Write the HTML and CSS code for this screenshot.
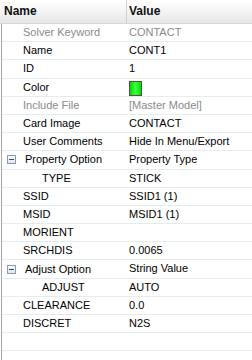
FILE: index.html
```html
<!DOCTYPE html>
<html lang="en">
<head>
    <meta charset="UTF-8">
    <title>Card Properties</title>
    <link rel="stylesheet" href="styles.css">
</head>
<body>
    <div class="grid">
        <div class="head">
            <div class="hcell">Name</div>
            <div class="hcell hval">Value</div>
        </div>
        <div class="rows">
            <div class="row dim"><span class="name">Solver Keyword</span><span class="val">CONTACT</span></div>
            <div class="row"><span class="name">Name</span><span class="val">CONT1</span></div>
            <div class="row"><span class="name">ID</span><span class="val">1</span></div>
            <div class="row"><span class="name">Color</span><span class="val"><i class="swatch"></i></span></div>
            <div class="row dim"><span class="name">Include File</span><span class="val">[Master Model]</span></div>
            <div class="row"><span class="name">Card Image</span><span class="val">CONTACT</span></div>
            <div class="row"><span class="name">User Comments</span><span class="val">Hide In Menu/Export</span></div>
            <div class="row group"><span class="name"><i class="toggle"></i>Property Option</span><span class="val">Property Type</span></div>
            <div class="row sub"><span class="name">TYPE</span><span class="val">STICK</span></div>
            <div class="row"><span class="name">SSID</span><span class="val">SSID1 (1)</span></div>
            <div class="row"><span class="name">MSID</span><span class="val">MSID1 (1)</span></div>
            <div class="row"><span class="name">MORIENT</span><span class="val"></span></div>
            <div class="row"><span class="name">SRCHDIS</span><span class="val">0.0065</span></div>
            <div class="row group"><span class="name"><i class="toggle"></i>Adjust Option</span><span class="val">String Value</span></div>
            <div class="row sub"><span class="name">ADJUST</span><span class="val">AUTO</span></div>
            <div class="row"><span class="name">CLEARANCE</span><span class="val">0.0</span></div>
            <div class="row"><span class="name">DISCRET</span><span class="val">N2S</span></div>
            <div class="row"><span class="name"></span><span class="val"></span></div>
            <div class="row"><span class="name"></span><span class="val"></span></div>
        </div>
    </div>
</body>
</html>
```

FILE: styles.css
```css
body {
    margin: 0;
    background: #fff;
    font-family: "Liberation Sans", Arial, sans-serif;
    font-size: 11px;
    color: #000;
}
.grid {
    width: 252px;
    height: 360px;
    overflow: hidden;
}
.head {
    display: grid;
    grid-template-columns: 126px 1fr;
    height: 23px;
    background: linear-gradient(#ffffff, #f4f4f4 50%, #e6e6e6);
    border-bottom: 1px solid #d5d5d5;
}
.hcell {
    font-size: 12px;
    font-weight: bold;
    line-height: 23px;
    padding-left: 4px;
    color: #101010;
}
.hval {
    border-left: 1px solid #d0d0d0;
    padding-left: 2px;
}
.rows {
    border-left: 1px solid #a8a8a8;
    margin-left: 1px;
    height: 340px;
}
.row {
    display: grid;
    grid-template-columns: 124px 1fr;
    height: 17.2px;
    line-height: 17px;
    border-bottom: 1px solid #e3ecf0;
}
.name {
    padding-left: 21px;
    white-space: nowrap;
}
.val {
    padding-left: 3px;
    white-space: nowrap;
}
.dim {
    color: #8a8a8a;
}
.sub .name {
    padding-left: 40px;
}
.group .name {
    padding-left: 5px;
    display: flex;
    align-items: center;
}
.toggle {
    width: 7px;
    height: 7px;
    border: 1px solid #8b9bb0;
    background: linear-gradient(#ffffff, #dfe4ea);
    margin-right: 9px;
    position: relative;
}
.toggle::after {
    content: "";
    position: absolute;
    left: 1px;
    top: 3px;
    width: 5px;
    height: 1px;
    background: #2a4c7c;
}
.swatch {
    display: inline-block;
    width: 11px;
    height: 13px;
    margin-top: 2px;
    vertical-align: top;
    border: 1px solid #505050;
    background: linear-gradient(90deg, #00d800, #40ff40 50%, #00e000);
}
```
